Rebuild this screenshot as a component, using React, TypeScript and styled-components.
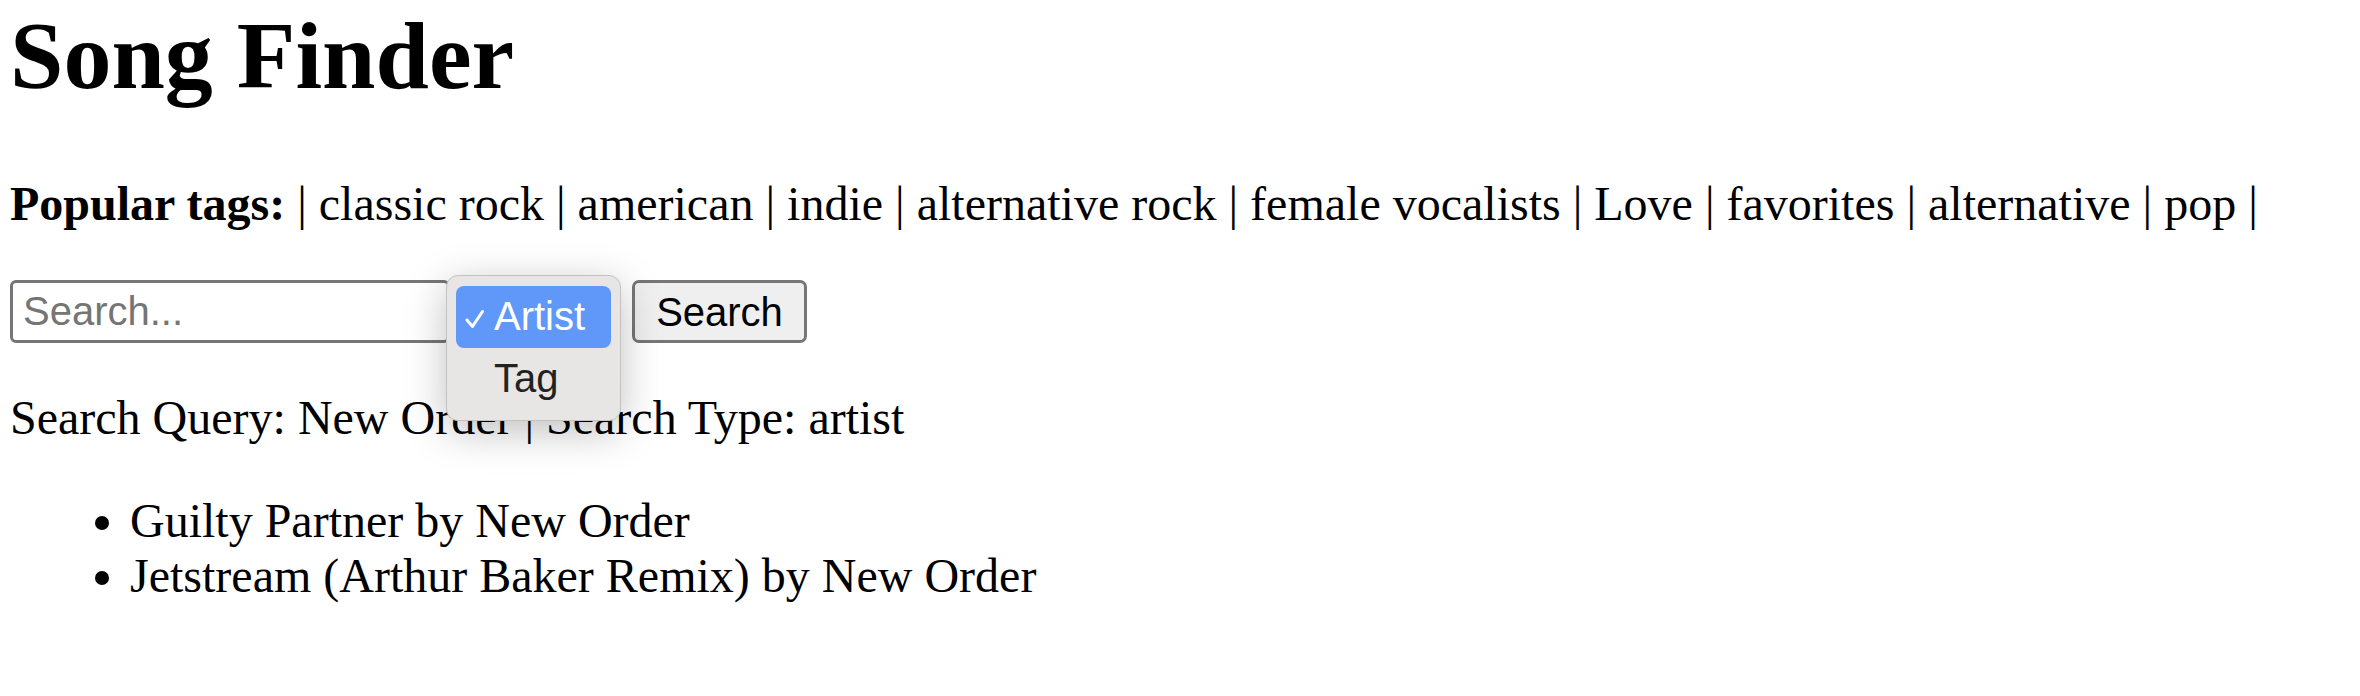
import React, { useState } from 'react';
import styled, { createGlobalStyle } from 'styled-components';

const controlFont = '40px/46px "Liberation Sans", Arial, sans-serif';

const Global = createGlobalStyle`
  body {
    margin: 0;
    background: #fff;
    color: #000;
    font-family: "Liberation Serif", "Times New Roman", serif;
    font-size: 48px;
    line-height: 55px;
  }
`;

const Page = styled.main`
  padding: 0 10px 80px;
`;

const Title = styled.h1`
  margin: 0;
  font-size: 96px;
  line-height: 112px;
  font-weight: 700;
`;

const Tags = styled.p`
  margin: 64px 0 0;
`;

const Form = styled.form`
  display: flex;
  align-items: flex-start;
  margin: 49px 0 47px;
`;

const SearchInput = styled.input`
  box-sizing: border-box;
  width: 440px;
  height: 63px;
  margin: 0;
  padding: 0 10px;
  border: 3px solid #767676;
  border-radius: 6px;
  font: ${controlFont};

  &::placeholder {
    color: #757575;
    opacity: 1;
  }
`;

const TypePicker = styled.div`
  position: relative;
  width: 182px;
  height: 63px;
`;

const Menu = styled.div`
  position: absolute;
  left: -4px;
  top: -5px;
  box-sizing: border-box;
  width: 175px;
  height: 146px;
  padding: 10px 9px;
  border: 1px solid #c4c2c1;
  border-radius: 12px;
  background: #e7e6e4;
  box-shadow: 0 10px 40px rgba(0, 0, 0, 0.25);
`;

const TypeSelect = styled.select`
  display: block;
  width: 100%;
  height: 124px;
  margin: 0;
  padding: 0;
  border: 0;
  outline: 0;
  overflow: hidden;
  background: transparent;
  font: ${controlFont};

  option {
    box-sizing: border-box;
    height: 62px;
    min-height: 62px;
    padding: 8px 0 8px 38px;
    border-radius: 8px;
    color: #222;
    font: ${controlFont};
  }

  option:checked {
    background: #6098f9 linear-gradient(#6098f9, #6098f9);
    color: #fff;
  }
`;

const Check = styled.svg<{ $row: number }>`
  position: absolute;
  left: 18px;
  top: ${p => 33 + p.$row * 62}px;
  pointer-events: none;
`;

const SearchButton = styled.button`
  box-sizing: border-box;
  width: 175px;
  height: 63px;
  margin: 0;
  padding: 0;
  border: 3px solid #767676;
  border-radius: 7px;
  background: #efefef;
  color: #000;
  font: ${controlFont};
`;

const Query = styled.p`
  margin: 0;
`;

const Songs = styled.ul`
  margin: 48px 0 0;
  padding: 0 0 0 120px;
`;

const tags = ['classic rock', 'american', 'indie', 'alternative rock', 'female vocalists', 'Love', 'favorites', 'alternative', 'pop'];
const types = ['Artist', 'Tag'];
const songs = [
  { name: 'Guilty Partner', artist: 'New Order' },
  { name: 'Jetstream (Arthur Baker Remix)', artist: 'New Order' },
];

export default function App() {
  const [type, setType] = useState('Artist');
  return (
    <Page>
      <Global />
      <Title>Song Finder</Title>
      <Tags><b>Popular tags:</b> | {tags.map(t => `${t} | `).join('')}</Tags>
      <Form onSubmit={e => e.preventDefault()}>
        <SearchInput type="text" placeholder="Search..." aria-label="Search" />
        <TypePicker>
          <Menu>
            <TypeSelect size={2} aria-label="Search type" value={type} onChange={e => setType(e.target.value)}>
              {types.map(t => <option key={t}>{t}</option>)}
            </TypeSelect>
            <Check $row={types.indexOf(type)} width="20" height="20" viewBox="0 0 20 20" fill="none" stroke="#fff" strokeWidth="3" strokeLinecap="round" strokeLinejoin="round">
              <path d="M2 11L7.5 17.5L17.5 2.5" />
            </Check>
          </Menu>
        </TypePicker>
        <SearchButton type="submit">Search</SearchButton>
      </Form>
      <Query>Search Query: New Order | Search Type: artist</Query>
      <Songs>
        {songs.map(s => <li key={s.name}>{s.name} by {s.artist}</li>)}
      </Songs>
    </Page>
  );
}
